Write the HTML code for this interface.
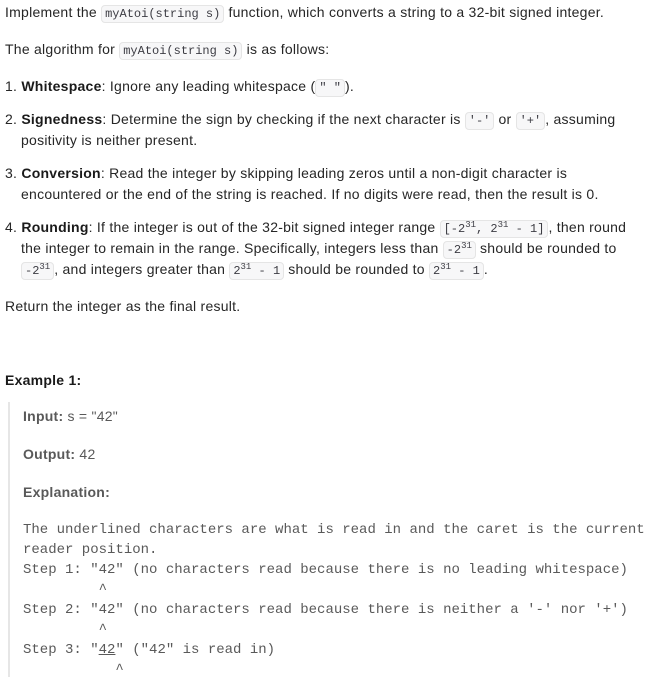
<!DOCTYPE html>
<html><head><meta charset="utf-8"><style>
body{margin:0;background:#fff;width:652px;height:677px;overflow:hidden;font-family:"Liberation Sans",sans-serif;font-size:14px;color:#262626;}
.l{position:absolute;left:5px;white-space:nowrap;line-height:20px;letter-spacing:0.25px}
.i{left:21px}
code{font-family:"Liberation Mono",monospace;font-size:12px;background:#f7f7f8;border:1px solid #e5e5e5;border-radius:4px;padding:1px 3px;color:#3c3c43;letter-spacing:0}
sup{font-size:9px;line-height:0}
.bq{position:absolute;left:8px;top:402px;width:2px;height:275px;background:#e6e6e6}
.m{font-family:"Liberation Mono",monospace;font-size:14px;color:#595959;left:23px;white-space:pre;letter-spacing:0}
.g{color:#595959;left:23px}
b{font-weight:bold;color:#1a1a1a}
.g b{color:#595959}
</style></head><body>
<div class="l" style="top:2px">Implement the <code>myAtoi(string s)</code> function, which converts a string to a 32-bit signed integer.</div>
<div class="l" style="top:39px">The algorithm for <code>myAtoi(string s)</code> is as follows:</div>
<div class="l" style="top:76px">1. <b>Whitespace</b>: Ignore any leading whitespace (<code>" "</code>).</div>
<div class="l" style="top:109px">2. <b>Signedness</b>: Determine the sign by checking if the next character is <code>'-'</code> or <code>'+'</code>, assuming</div>
<div class="l i" style="top:130px">positivity is neither present.</div>
<div class="l" style="top:163px">3. <b>Conversion</b>: Read the integer by skipping leading zeros until a non-digit character is</div>
<div class="l i" style="top:184px">encountered or the end of the string is reached. If no digits were read, then the result is 0.</div>
<div class="l" style="top:217px">4. <b>Rounding</b>: If the integer is out of the 32-bit signed integer range <code>[-2<sup>31</sup>, 2<sup>31</sup> - 1]</code>, then round</div>
<div class="l i" style="top:238px">the integer to remain in the range. Specifically, integers less than <code>-2<sup>31</sup></code> should be rounded to</div>
<div class="l i" style="top:259px"><code>-2<sup>31</sup></code>, and integers greater than <code>2<sup>31</sup> - 1</code> should be rounded to <code>2<sup>31</sup> - 1</code>.</div>
<div class="l" style="top:296px">Return the integer as the final result.</div>
<div class="l" style="top:370px"><b>Example 1:</b></div>
<div class="bq"></div>
<div class="l g" style="top:406px"><b>Input:</b> s = "42"</div>
<div class="l g" style="top:444px"><b>Output:</b> 42</div>
<div class="l g" style="top:482px"><b>Explanation:</b></div>
<div class="l m" style="top:520px">The underlined characters are what is read in and the caret is the current</div>
<div class="l m" style="top:540px">reader position.</div>
<div class="l m" style="top:560px">Step 1: "42" (no characters read because there is no leading whitespace)</div>
<div class="l m" style="top:580px">         ^</div>
<div class="l m" style="top:600px">Step 2: "42" (no characters read because there is neither a '-' nor '+')</div>
<div class="l m" style="top:620px">         ^</div>
<div class="l m" style="top:640px">Step 3: "<u>42</u>" ("42" is read in)</div>
<div class="l m" style="top:660px">           ^</div>
</body></html>
